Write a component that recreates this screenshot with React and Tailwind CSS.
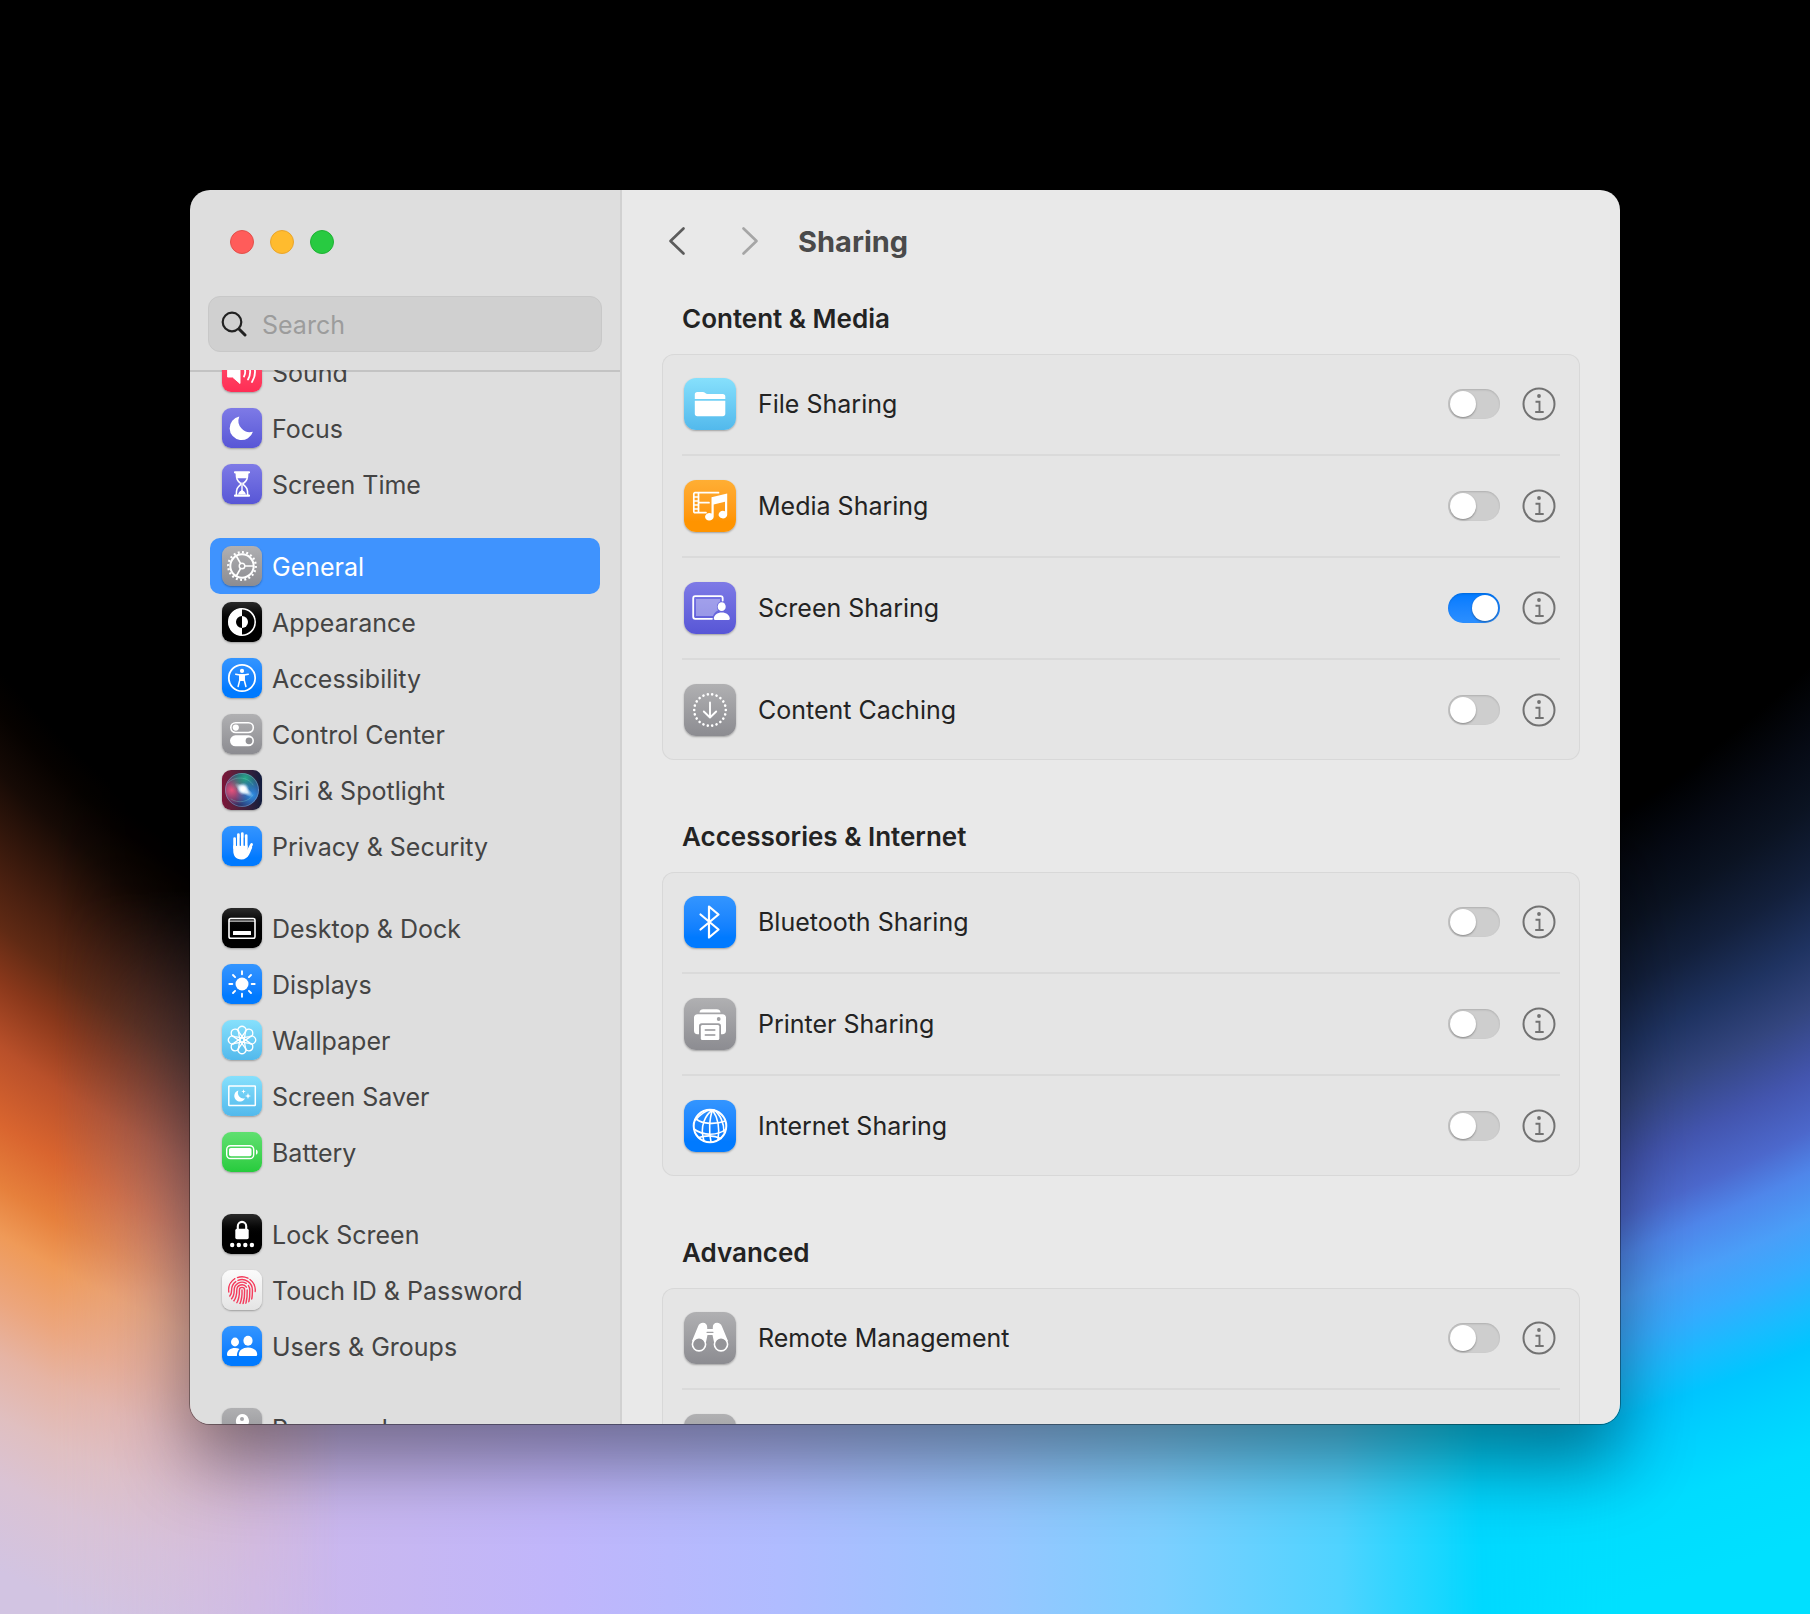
import React from 'react';
import clsx from 'clsx';

const tileColors = {
  red: 'bg-linear-to-b from-[#ff4f6f] to-[#ff2d55]',
  indigo: 'bg-linear-to-b from-[#7e7ae6] to-[#5856d6]',
  gray: 'bg-linear-to-b from-[#b0b0b2] to-[#8c8c91]',
  black: 'bg-linear-to-b from-[#2b2b2b] to-[#000000] to-60%',
  blue: 'bg-linear-to-b from-[#3395ff] to-[#007aff] to-80%',
  sky: 'bg-linear-to-b from-[#86e0fc] to-[#52b9ec]',
  green: 'bg-linear-to-b from-[#5fe070] to-[#25cb3c]',
  white: 'bg-linear-to-b from-[#fbfbfb] to-[#e4e4e4]',
  orange: 'bg-linear-to-b from-[#ffae33] to-[#ff9400] to-80%',
  siri: 'bg-linear-to-r from-[#7d1338] to-[#101c3c]',
};

const Glyph = ({ box = 40, children }) => (
  <svg
    viewBox={`0 0 ${box} ${box}`}
    className="size-full"
    fill="none"
    stroke="#fff"
    strokeLinecap="round"
    strokeLinejoin="round"
    aria-hidden="true"
  >
    {children}
  </svg>
);

/* Sidebar glyphs, 40 x 40 */

const SoundGlyph = () => (
  <Glyph>
    <path d="M6 15h4.500l7.500-6.500v23L10.500 25H6z" fill="#fff" strokeWidth="1" />
    <path d="M22 15.500c1.500 2.800 1.500 6.200 0 9M26 12.500c2.700 4.700 2.700 10.300 0 15M30 10c3.800 6.300 3.800 13.700 0 20" strokeWidth="1.800" />
  </Glyph>
);

const FocusGlyph = () => (
  <Glyph>
    <path d="M17.300 8.500A11.900 11.900 0 1 0 30.900 23.700A11.400 11.400 0 0 1 17.300 8.500z" fill="#fff" stroke="none" />
  </Glyph>
);

const HourglassGlyph = () => (
  <Glyph>
    <path d="M13 8.300h14M13 31.700h14" strokeWidth="2.200" />
    <path d="M14.300 9c0 6 .8 7.500 4.300 10.400v1.200c-3.500 2.900-4.300 4.400-4.300 10.400M25.700 9c0 6-.8 7.500-4.300 10.400v1.200c3.500 2.900 4.300 4.400 4.300 10.400" strokeWidth="1.500" />
    <path d="M14.300 9h11.400c0 2.500-.2 4-.7 5.200H15c-.5-1.200-.7-2.700-.7-5.200zM16 30.500c.8-2.700 2.400-3.300 4-4.700 1.600 1.400 3.200 2 4 4.700z" fill="#fff" stroke="none" />
    <path d="M20 19v8" strokeWidth="1.400" />
  </Glyph>
);

const GearGlyph = () => (
  <Glyph>
    <circle cx="20" cy="20" r="11.700" strokeWidth="2" />
    <circle cx="20" cy="20" r="13.800" strokeWidth="2.200" strokeLinecap="butt" pathLength="40" strokeDasharray="0.9 1.1" />
    <circle cx="20" cy="20" r="2.800" strokeWidth="1.400" />
    <path d="M23 20h8M18.500 17.400l-4.200-7.400M18.500 22.600l-4.200 7.400" strokeWidth="1.700" />
  </Glyph>
);

const AppearanceGlyph = () => (
  <Glyph>
    <circle cx="20" cy="20" r="13.200" strokeWidth="1.600" />
    <path d="M20 6.500a13.500 13.500 0 0 0 0 27V26a6 6 0 0 1 0-12z" fill="#fff" stroke="none" />
    <path d="M20 14a6 6 0 0 1 0 12z" fill="#fff" stroke="none" />
  </Glyph>
);

const AccessibilityGlyph = () => (
  <Glyph>
    <circle cx="20" cy="20" r="13.200" strokeWidth="1.800" />
    <circle cx="20" cy="12.900" r="2.100" fill="#fff" stroke="none" />
    <path d="M13.700 16.200l4.300.9h4l4.300-.9" strokeWidth="1.500" />
    <path d="M17.800 17h4.400v5l1.700 6.500M22.200 22h-4.400l-1.700 6.500M17.800 17v5" strokeWidth="1.500" />
    <path d="M17.500 16.500h5V23h-5z" fill="#fff" stroke="none" />
  </Glyph>
);

const ControlCenterGlyph = () => (
  <Glyph>
    <rect x="8.800" y="8.700" width="22.500" height="9.800" rx="4.900" strokeWidth="1.600" />
    <circle cx="13.800" cy="13.600" r="3.100" fill="#fff" stroke="none" />
    <rect x="8" y="21.300" width="24" height="11" rx="5.500" fill="#fff" stroke="none" />
    <circle cx="27" cy="26.800" r="3.400" fill="#929296" stroke="none" />
  </Glyph>
);

const SiriGlyph = () => (
  <Glyph>
    <defs>
      <radialGradient id="siri-pink" cx="0.2" cy="0.5" r="0.5">
        <stop offset="0" stopColor="#e8527c" />
        <stop offset="1" stopColor="#e8527c" stopOpacity="0" />
      </radialGradient>
      <radialGradient id="siri-green" cx="0.6" cy="0.15" r="0.5">
        <stop offset="0" stopColor="#27a889" />
        <stop offset="1" stopColor="#27a889" stopOpacity="0" />
      </radialGradient>
      <radialGradient id="siri-blue" cx="0.8" cy="0.65" r="0.5">
        <stop offset="0" stopColor="#2f8fe6" />
        <stop offset="1" stopColor="#2f8fe6" stopOpacity="0" />
      </radialGradient>
      <radialGradient id="siri-core" cx="0.5" cy="0.5" r="0.5">
        <stop offset="0" stopColor="#fff" />
        <stop offset="0.35" stopColor="#fff" stopOpacity="0.85" />
        <stop offset="1" stopColor="#bfe4ff" stopOpacity="0" />
      </radialGradient>
    </defs>
    <g stroke="none">
      <circle cx="20" cy="20" r="17" fill="#2a2f63" />
      <circle cx="20" cy="20" r="17" fill="url(#siri-pink)" />
      <circle cx="20" cy="20" r="17" fill="url(#siri-green)" />
      <circle cx="20" cy="20" r="17" fill="url(#siri-blue)" />
      <ellipse cx="22" cy="20" rx="11" ry="4" transform="rotate(35 22 20)" fill="url(#siri-core)" />
      <circle cx="21" cy="19" r="6.500" fill="url(#siri-core)" />
      <circle cx="21" cy="19" r="5" fill="url(#siri-core)" />
    </g>
    <circle cx="20" cy="20" r="16.500" stroke="#8fa6c4" strokeOpacity="0.6" strokeWidth="0.8" />
    <path d="M6 13c6-7 20-7 25 2M9 29c7 5 18 3 22-4" stroke="#7fd6c8" strokeOpacity="0.4" strokeWidth="0.8" />
  </Glyph>
);

const HandGlyph = () => (
  <Glyph>
    <path d="M12.600 12.500V22M16.400 8.500V21M20.300 7.500V21M24.200 9.500V22" strokeWidth="2.700" />
    <path d="M29.600 18.500c-1.200 2-2.200 4.500-3.600 6.500" strokeWidth="2.700" />
    <path d="M11.250 19.500H25.550v4.500l3.700-4 1 1.500c-1.800 3.500-3.200 12-10.800 12-5.700 0-8.200-3.800-8.200-9z" fill="#fff" stroke="none" />
    <path d="M14.500 19.500V13M18.350 19.500V12M22.250 19.500V12" stroke="#1583ff" strokeWidth="0.9" />
  </Glyph>
);

const DockGlyph = () => (
  <Glyph>
    <rect x="7" y="10.500" width="26" height="19.800" rx="1.800" strokeWidth="1.600" />
    <path d="M7.500 13.200h25" strokeWidth="1.300" strokeOpacity="0.8" />
    <rect x="11" y="23" width="18" height="4" rx="0.600" fill="#fff" stroke="none" />
  </Glyph>
);

const SunGlyph = () => (
  <Glyph>
    <circle cx="20" cy="20" r="6.500" fill="#fff" stroke="none" />
    <path d="M20 7.300v3M20 29.700v3M7.300 20h3M29.700 20h3M11 11l2.100 2.100M26.900 26.900L29 29M11 29l2.100-2.100M26.900 13.100L29 11" strokeWidth="1.900" />
  </Glyph>
);

const FlowerGlyph = () => (
  <Glyph>
    {[0, 45, 90, 135, 180, 225, 270, 315].map((angle) => (
      <path
        key={angle}
        d="M18.200 22L16.600 12.500A4 4 0 1 1 23.400 12.500L21.800 22"
        strokeWidth="1.300"
        transform={`rotate(${angle} 20 20)`}
      />
    ))}
  </Glyph>
);

const ScreenSaverGlyph = () => (
  <Glyph>
    <rect x="6.800" y="10" width="26.500" height="19.500" rx="0.500" strokeWidth="1.500" />
    <path d="M16.500 14.500a5.600 5.600 0 1 0 6.500 7.700a5.500 5.500 0 0 1-6.500-7.700z" fill="#fff" stroke="none" />
    <path d="M21.500 13.200l.6 1.700 1.700.6-1.700.6-.6 1.700-.6-1.700-1.700-.6 1.700-.6zM26 17l.8 2.200 2.200.8-2.200.8L26 23l-.8-2.200-2.200-.8 2.200-.8z" fill="#fff" stroke="none" />
  </Glyph>
);

const BatteryGlyph = () => (
  <Glyph>
    <rect x="4.700" y="13.700" width="27" height="12.800" rx="3.800" strokeWidth="1.400" />
    <rect x="7" y="16" width="22.500" height="8.200" rx="1.800" fill="#fff" stroke="none" />
    <path d="M34 17.500c2.200.7 2.200 4.500 0 5.200z" fill="#fff" stroke="none" />
  </Glyph>
);

const LockGlyph = () => (
  <Glyph>
    <path d="M15.800 16v-3.800a4.200 4.300 0 0 1 8.400 0V16" strokeWidth="2.100" />
    <rect x="13.300" y="14.800" width="13.400" height="10.400" rx="1.600" fill="#fff" stroke="none" />
    <g fill="#fff" stroke="none">
      <circle cx="10.200" cy="31" r="2.200" />
      <circle cx="16.800" cy="31" r="2.200" />
      <circle cx="23.300" cy="31" r="2.200" />
      <circle cx="29.900" cy="31" r="2.200" />
    </g>
  </Glyph>
);

const TouchGlyph = () => (
  <Glyph>
    <clipPath id="touch-clip">
      <circle cx="20" cy="20" r="14.300" />
    </clipPath>
    <g clipPath="url(#touch-clip)" stroke="#f43c5c" strokeWidth="1.400">
      <path d="M20 20c.3 5-.2 9.500-2.200 14" />
      <path d="M14.200 34c2.500-4 3.400-8.500 3.200-14a2.600 2.600 0 0 1 5.200 0c.2 5.500-.2 9.500-1.600 14" />
      <path d="M11.500 31.500c2.600-3.500 3.400-7 3.300-11.500a5.200 5.200 0 0 1 9.600-2.800M25.200 20c.2 5-.2 9-1.400 14" />
      <path d="M9 29.500c2.500-2.700 3.300-5.500 3.200-9.500a7.800 7.800 0 0 1 12-6.600M26.400 15.600a7.800 7.800 0 0 1 1.400 4.400c.1 4.500 0 8-1 12" />
      <path d="M7.500 26.500c1.700-1.700 2.200-3.500 2.100-6.500a10.400 10.400 0 0 1 4.200-8.400M16 10.400a10.400 10.400 0 0 1 14.400 9.600c0 3.500 0 6.500-.7 9" />
      <path d="M6.800 22a13.300 13.300 0 0 1 6-13.300M15.500 7.500a13.300 13.300 0 0 1 10.500.7M28 9.500a13.300 13.300 0 0 1 5.200 12" />
    </g>
  </Glyph>
);

const UsersGlyph = () => (
  <Glyph>
    <g fill="#fff" stroke="none">
      <ellipse cx="13" cy="16" rx="4" ry="4.400" />
      <ellipse cx="26" cy="14.800" rx="4.600" ry="5" />
      <path d="M5 28.500c0-4 3.500-6.500 8-6.500 1.700 0 3.200.4 4.500 1.100-1.700 1.600-2.600 3.800-2.600 6.900H6.500c-1 0-1.500-.5-1.500-1.500z" />
      <path d="M16.800 28.500c0-4 4-7 9.200-7s9.200 3 9.200 7c0 1-.6 1.500-1.600 1.500H18.400c-1 0-1.600-.5-1.600-1.500z" />
    </g>
  </Glyph>
);

const KeyGlyph = () => (
  <Glyph>
    <path d="M20 6a7 7 0 0 1 4 12.700V31l-4 4-3-3V18.700A7 7 0 0 1 20 6z" fill="#fff" stroke="none" />
    <circle cx="20" cy="11" r="2" fill="#a5a5a8" stroke="none" />
  </Glyph>
);

/* Sharing glyphs, 52 x 52 */

const FolderGlyph = () => (
  <Glyph box={52}>
    <path d="M10.800 21v-4.500c0-1.600.9-2.500 2.500-2.500h5.400c2.300 0 2.800 2 5 2h15c1.700 0 2.600 1 2.600 2.500V21z" fill="#fff" stroke="none" />
    <path d="M10.800 22.800h30.500v13c0 1.600-.9 2.500-2.600 2.500H13.300c-1.600 0-2.500-.9-2.500-2.500z" fill="#fff" stroke="none" />
  </Glyph>
);

const MediaGlyph = () => (
  <Glyph box={52}>
    <path d="M34.500 12.700H11a1.200 1.200 0 0 0-1.200 1.200v17.600a1.200 1.200 0 0 0 1.200 1.200h11M14.500 12.700v20M14.500 22.700H25" strokeWidth="1.700" />
    <path d="M9.800 17h4.700M9.800 21h4.700M9.800 25h4.700M9.800 29h4.700" strokeWidth="1.500" />
    <path d="M27.500 17.200l15.700-3.700v21a4.300 3.800 0 1 1-2.200-3.200V21.800l-11.300 2.600v12.300a4.300 3.800 0 1 1-2.200-3.300z" fill="#fff" stroke="none" />
  </Glyph>
);

const ScreenGlyph = () => (
  <Glyph box={52}>
    <path d="M38.700 18.500v-2.300a2 2 0 0 0-2-2H11.200a2 2 0 0 0-2 2v18.600a2 2 0 0 0 2 2H28" strokeWidth="1.800" />
    <path d="M12 17h24v2.500c-3 1.500-4 5-2 9-2 1-4 2.500-5 5.500H12z" fill="#fff" fillOpacity="0.34" stroke="none" />
    <ellipse cx="37.700" cy="24.700" rx="4" ry="4.400" fill="#fff" stroke="none" />
    <path d="M29.800 36.800c0-3.600 3.500-6.200 8-6.200s8 2.600 8 6.200c0 .7-.4 1.200-1.200 1.200H31c-.8 0-1.200-.5-1.200-1.200z" fill="#fff" stroke="none" />
  </Glyph>
);

const CachingGlyph = () => (
  <Glyph box={52}>
    <circle cx="26" cy="26" r="15.800" strokeWidth="2.600" pathLength="44" strokeDasharray="0.01 1.99" />
    <path d="M26 18.500v14.700M19.800 27.500l6.200 6 6.200-6" strokeWidth="1.900" />
  </Glyph>
);

const BluetoothGlyph = () => (
  <Glyph box={52}>
    <path d="M16.500 18.500L34.500 33.500L25 41.500V10.500L34.500 18.500L16.500 33.500" strokeWidth="2.200" />
  </Glyph>
);

const PrinterGlyph = () => (
  <Glyph box={52}>
    <path d="M15.500 14.500c.3-2.300 1.500-3.300 3.700-3.300h13.600c2.200 0 3.400 1 3.700 3.300z" fill="#fff" stroke="none" />
    <path d="M13.500 16.300h25c2.200 0 3.500 1.300 3.500 3.500v13c0 2.200-1.300 3.500-3.500 3.500H37V28c0-1.700-1-2.700-2.700-2.700H17.700c-1.700 0-2.700 1-2.700 2.700v8.300h-1.500c-2.200 0-3.500-1.300-3.500-3.500v-13c0-2.200 1.300-3.500 3.500-3.500z" fill="#fff" stroke="none" />
    <circle cx="34.700" cy="21" r="1.900" fill="#a0a0a3" stroke="none" />
    <rect x="16.800" y="27" width="18.500" height="15" rx="1.500" fill="#fff" stroke="none" />
    <path d="M21.300 32h9.500M21.300 37h9.500" stroke="#949498" strokeWidth="1.500" />
  </Glyph>
);

const GlobeGlyph = () => (
  <Glyph box={52}>
    <circle cx="26" cy="26" r="16.300" strokeWidth="2" />
    <path
      d="M28.500 10c-6 4-13.500 15-8.500 31M28.500 10c-3 8-4 22-1.500 32M28.500 10c5 7 7.500 17 5.500 30M26 10c-6 1-11 6-14.500 10M30 10c6 4 10 13 10 22"
      strokeWidth="1.600"
    />
    <path d="M12 19c7 5.500 20 5.500 29.500 2M10 29c9 7 24 7 32 0" strokeWidth="1.600" />
    <path d="M14.500 37.500c7-2 16-2 22.500 1" strokeWidth="1.600" />
  </Glyph>
);

const BinocularsGlyph = () => (
  <Glyph box={52}>
    <path d="M8 29l6-14.500c1-2.600 2.700-3.800 5-3.800 2.500 0 4.200 1.700 4.200 4.300V17h5.600v-2c0-2.600 1.700-4.300 4.200-4.300 2.300 0 4 1.200 5 3.800L44 29l-7 2-7-1-1.500-7h-5L22 30l-7 1z" fill="#fff" stroke="none" />
    <path d="M23 20.300h6" stroke="#a0a0a3" strokeWidth="1.200" />
    <circle cx="15" cy="32.300" r="6.600" fill="#949498" strokeWidth="1.600" />
    <circle cx="37" cy="32.300" r="6.600" fill="#949498" strokeWidth="1.600" />
  </Glyph>
);

const InfoGlyph = () => (
  <svg viewBox="0 0 34 34" className="size-[34px]" fill="none" stroke="#727272" aria-hidden="true">
    <circle cx="17" cy="17" r="15.500" strokeWidth="2" />
    <circle cx="17" cy="9" r="1.900" fill="#727272" stroke="none" />
    <path d="M13.500 14.700h4v10.300M13.200 25h8.500" strokeWidth="1.900" />
  </svg>
);

const sidebarGroups = [
  [
    { label: 'Sound', color: 'red', icon: SoundGlyph },
    { label: 'Focus', color: 'indigo', icon: FocusGlyph },
    { label: 'Screen Time', color: 'indigo', icon: HourglassGlyph },
  ],
  [
    { label: 'General', color: 'gray', icon: GearGlyph, active: true },
    { label: 'Appearance', color: 'black', icon: AppearanceGlyph },
    { label: 'Accessibility', color: 'blue', icon: AccessibilityGlyph },
    { label: 'Control Center', color: 'gray', icon: ControlCenterGlyph },
    { label: 'Siri & Spotlight', color: 'siri', icon: SiriGlyph },
    { label: 'Privacy & Security', color: 'blue', icon: HandGlyph },
  ],
  [
    { label: 'Desktop & Dock', color: 'black', icon: DockGlyph },
    { label: 'Displays', color: 'blue', icon: SunGlyph },
    { label: 'Wallpaper', color: 'sky', icon: FlowerGlyph },
    { label: 'Screen Saver', color: 'sky', icon: ScreenSaverGlyph },
    { label: 'Battery', color: 'green', icon: BatteryGlyph },
  ],
  [
    { label: 'Lock Screen', color: 'black', icon: LockGlyph },
    { label: 'Touch ID & Password', color: 'white', icon: TouchGlyph },
    { label: 'Users & Groups', color: 'blue', icon: UsersGlyph },
  ],
  [{ label: 'Passwords', color: 'gray', icon: KeyGlyph }],
];

const sections = [
  {
    title: 'Content & Media',
    rows: [
      { id: 'file', label: 'File Sharing', color: 'sky', icon: FolderGlyph },
      { id: 'media', label: 'Media Sharing', color: 'orange', icon: MediaGlyph },
      { id: 'screen', label: 'Screen Sharing', color: 'indigo', icon: ScreenGlyph, on: true },
      { id: 'caching', label: 'Content Caching', color: 'gray', icon: CachingGlyph },
    ],
  },
  {
    title: 'Accessories & Internet',
    rows: [
      { id: 'bluetooth', label: 'Bluetooth Sharing', color: 'blue', icon: BluetoothGlyph },
      { id: 'printer', label: 'Printer Sharing', color: 'gray', icon: PrinterGlyph },
      { id: 'internet', label: 'Internet Sharing', color: 'blue', icon: GlobeGlyph },
    ],
  },
  {
    title: 'Advanced',
    rows: [
      { id: 'management', label: 'Remote Management', color: 'gray', icon: BinocularsGlyph },
      { id: 'more', color: 'gray' },
    ],
  },
];

const Tile = ({ color, large, children }) => (
  <span
    className={clsx(
      'flex shrink-0 items-center justify-center overflow-hidden shadow-[0_1px_2px_rgba(0,0,0,0.3)]',
      large ? 'size-[52px] rounded-xl' : 'size-10 rounded-[9px]',
      tileColors[color]
    )}
  >
    {children}
  </span>
);

const SidebarItem = ({ item }) => {
  const Icon = item.icon;
  return (
    <li>
      <a
        href="#"
        aria-current={item.active ? 'page' : undefined}
        className={clsx(
          'flex h-14 items-center gap-2.5 rounded-[10px] px-3',
          item.active ? 'bg-[#3f93fe] text-white' : 'text-[#444444]'
        )}
      >
        <Tile color={item.color}>
          <Icon />
        </Tile>
        <span className="pt-1 whitespace-nowrap">{item.label}</span>
      </a>
    </li>
  );
};

const Sidebar = () => (
  <aside className="flex w-[432px] shrink-0 flex-col border-r-2 border-[#d1d1d1] bg-[#dedede]">
    <div className="flex gap-4 px-10 pt-10">
      <button aria-label="Close" className="size-6 rounded-full border border-[#e2504a] bg-[#ff5c5a]" />
      <button aria-label="Minimize" className="size-6 rounded-full border border-[#e9a52c] bg-[#ffbb2e]" />
      <button aria-label="Zoom" className="size-6 rounded-full border border-[#1fb234] bg-[#28ca41]" />
    </div>

    <label className="mx-[18px] mt-[42px] mb-[18px] flex h-14 shrink-0 items-center gap-[15px] rounded-xl border border-[#c8c8c8] bg-[#d0d0d0] px-3">
      <svg viewBox="0 0 26 26" className="size-[26px] shrink-0" fill="none" stroke="#222" strokeLinecap="round" aria-hidden="true">
        <circle cx="11" cy="11" r="9.300" strokeWidth="2.200" />
        <path d="M18 18l6 6" strokeWidth="3" />
      </svg>
      <input
        type="search"
        placeholder="Search"
        aria-label="Search"
        className="w-full min-w-0 bg-transparent pt-1 outline-none placeholder:text-[#9c9c9c]"
      />
    </label>

    {/* Scrolled list, starts part way through the Sound row */}
    <nav className="min-h-0 flex-1 overflow-hidden px-5 shadow-[inset_0_2px_0_#c3c3c3]">
      <div className="-mt-[26px] flex flex-col gap-[26px]">
        {sidebarGroups.map((group, index) => (
          <ul key={index}>
            {group.map((item) => (
              <SidebarItem key={item.label} item={item} />
            ))}
          </ul>
        ))}
      </div>
    </nav>
  </aside>
);

const SharingRow = ({ row }) => {
  const Icon = row.icon;
  return (
    <li className="border-b-2 border-[#dadada] last:border-b-0">
      <div className="flex h-[100px] items-center pr-1 pl-0.5">
        <Tile color={row.color} large>
          {Icon && <Icon />}
        </Tile>
        {row.label && (
          <>
            <label htmlFor={row.id} className="ml-[22px] flex-1 pt-0.5">
              {row.label}
            </label>
            <input
              id={row.id}
              type="checkbox"
              role="switch"
              defaultChecked={row.on}
              className="flex h-[30px] w-[52px] shrink-0 appearance-none items-center rounded-full bg-[#cecece] p-0.5 shadow-[inset_0_1px_2px_rgba(0,0,0,0.15)] before:size-[26px] before:rounded-full before:bg-white before:shadow-[0_1px_2px_rgba(0,0,0,0.35)] before:content-[''] checked:justify-end checked:bg-linear-to-b checked:from-[#007aff] checked:to-[#2b8fff]"
            />
            <button aria-label={`About ${row.label}`} className="ml-[22px] shrink-0">
              <InfoGlyph />
            </button>
          </>
        )}
      </div>
    </li>
  );
};

const SharingPanel = () => (
  <main className="flex min-w-0 flex-1 flex-col bg-[#e9e9e9]">
    <header className="flex h-[102px] shrink-0 items-center pl-[43px]">
      <button aria-label="Back" className="mr-[49px]">
        <svg viewBox="0 0 24 32" className="h-8 w-6" fill="none" stroke="#5c5c5c" strokeWidth="2.700" strokeLinecap="round" strokeLinejoin="round">
          <path d="M18.500 3.500L5.500 16l13 12.500" />
        </svg>
      </button>
      <button aria-label="Forward" className="mr-9">
        <svg viewBox="0 0 24 32" className="h-8 w-6" fill="none" stroke="#a6a6a6" strokeWidth="2.700" strokeLinecap="round" strokeLinejoin="round">
          <path d="M5.500 3.500l13 12.500l-13 12.500" />
        </svg>
      </button>
      <h1 className="pt-0.5 text-[29px] font-bold text-[#4a4a4a]">Sharing</h1>
    </header>

    <div className="flex min-h-0 flex-1 flex-col gap-[62px] overflow-hidden px-10 pt-3 text-[#232323]">
      {sections.map((section) => (
        <section key={section.title}>
          <h2 className="mb-5 px-5 text-[26px] leading-[30px] font-semibold">{section.title}</h2>
          <ul className="rounded-xl bg-[#e5e5e5] px-5 shadow-[inset_0_0_0_1px_#d8d8d8]">
            {section.rows.map((row) => (
              <SharingRow key={row.id} row={row} />
            ))}
          </ul>
        </section>
      ))}
    </div>
  </main>
);

/* Black sky over a pastel floor, with a warm glow on the left and a cool one on the right */
const Wallpaper = () => (
  <div
    aria-hidden="true"
    className="absolute inset-0 -z-10 [background-image:linear-gradient(180deg,#000_55%,transparent_80%),linear-gradient(90deg,#d2c5df_0%,#cdb8ea_14%,#c0b6fb_31%,#b0bcff_43%,#98c6ff_55%,#7dcfff_64%,#50d3ff_74%,#00d8ff_82%,#00e0ff_94%)]"
  >
    <div className="absolute inset-y-0 left-0 w-1/4 mask-r-from-12% mask-r-to-75% [background-image:radial-gradient(2309px_2000px_at_200%_100px,#000_48.5%,#060200_49.8%,#160a05_51.7%,#4a2010_55.3%,#602a14_57%,#8a381b_59%,#b9502a_61.5%,#d9652f_64.5%,#e6803c_67%,#ef9a58_69%,#eca67e_71.7%,#e6b4a4_74%,#e0bfc0_76.7%,#dac3d4_79.4%,#d2c4e2_83.4%)]" />
    <div className="absolute inset-y-0 right-0 w-1/4 mask-l-from-42% mask-l-to-80% [background-image:radial-gradient(2582px_2000px_at_-100%_100px,#000_45%,#060a14_47.5%,#0b1322_49.7%,#13203c_52.3%,#1f3361_54.9%,#33457e_57.3%,#4355ae_60%,#4c68cc_62.3%,#4f86ea_64%,#4a9ef8_66%,#35acff_68%,#18bcff_69.9%,#00c6ff_71.5%,#00d0ff_73.3%,#00dcff_76%,#00e0ff_80%)]" />
  </div>
);

const App = () => (
  <div className="relative isolate h-screen p-[190px] font-['Inter',sans-serif] text-[25px]">
    <Wallpaper />
    <div className="flex h-full overflow-hidden rounded-[20px] shadow-[0_0_0_1px_rgba(0,0,0,0.35),0_40px_72px_rgba(0,0,0,0.42)]">
      <Sidebar />
      <SharingPanel />
    </div>
  </div>
);

export default App;
